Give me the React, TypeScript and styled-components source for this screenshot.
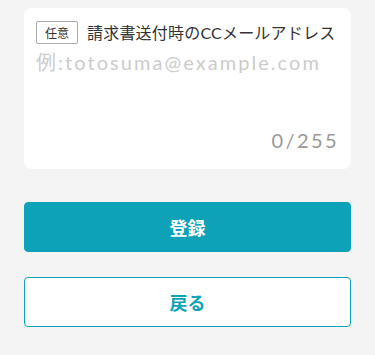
import React, { useState } from 'react';
import styled, { createGlobalStyle } from 'styled-components';

const GlobalStyle = createGlobalStyle`
  html, body {
    margin: 0;
    padding: 0;
    background: #f4f4f4;
    font-family: Lato, "Noto Sans CJK JP", "Noto Sans", sans-serif;
  }
`;

const Page = styled.main`
  padding: 8px 24px 24px;
  display: flex;
  flex-direction: column;
`;

const Card = styled.section`
  background: #fff;
  border-radius: 8px;
  padding: 12px 12px 19px;
  display: flex;
  flex-direction: column;
`;

const LabelRow = styled.label`
  display: flex;
  align-items: center;
  gap: 9px;
`;

const Badge = styled.span`
  display: inline-flex;
  align-items: center;
  justify-content: center;
  height: 23px;
  padding: 0 8px;
  box-sizing: border-box;
  border: 1px solid #aaa;
  border-radius: 2px;
  font-size: 12px;
  color: #333;
`;

const LabelText = styled.span`
  font-size: 16px;
  color: #333;
  letter-spacing: 0.2px;
`;

const Input = styled.textarea`
  margin-top: 5px;
  border: none;
  outline: none;
  resize: none;
  height: 81px;
  padding: 0;
  font-family: inherit;
  font-size: 20px;
  line-height: 27px;
  letter-spacing: 2.05px;
  color: #333;
  &::placeholder {
    color: #cccccc;
  }
`;

const Counter = styled.div`
  text-align: right;
  font-size: 20px;
  letter-spacing: 2.4px;
  color: #999;
  line-height: 1;
`;

const Actions = styled.div`
  margin-top: 33px;
  display: flex;
  flex-direction: column;
  gap: 25px;
`;

const Button = styled.button<{ $primary?: boolean }>`
  height: 50px;
  border-radius: 4px;
  border: 1px solid #0ea2b9;
  background: ${(p) => (p.$primary ? '#0ea2b9' : '#fff')};
  color: ${(p) => (p.$primary ? '#fff' : '#0ea2b9')};
  font-family: inherit;
  font-size: 18px;
  font-weight: 700;
  cursor: pointer;
`;

export default function App() {
  const [value, setValue] = useState('');
  return (
    <>
      <GlobalStyle />
      <Page>
        <Card>
          <LabelRow>
            <Badge>任意</Badge>
            <LabelText>請求書送付時のCCメールアドレス</LabelText>
          </LabelRow>
          <Input
            value={value}
            maxLength={255}
            placeholder="例:totosuma@example.com"
            onChange={(e) => setValue(e.target.value)}
          />
          <Counter>{value.length}/255</Counter>
        </Card>
        <Actions>
          <Button $primary>登録</Button>
          <Button>戻る</Button>
        </Actions>
      </Page>
    </>
  );
}
